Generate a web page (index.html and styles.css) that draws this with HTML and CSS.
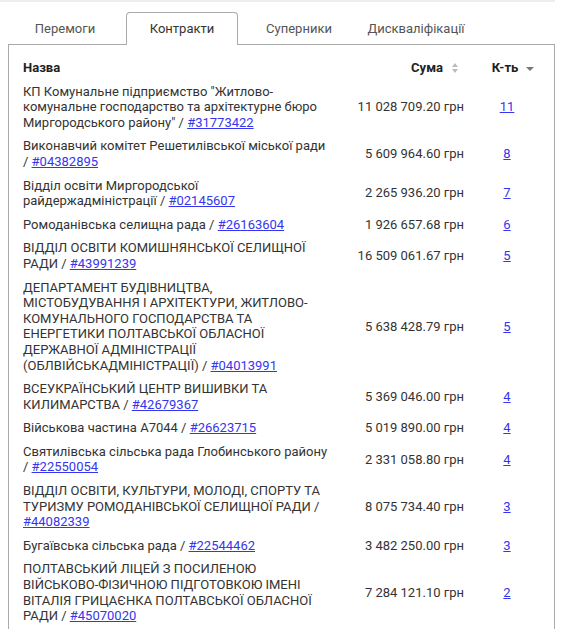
FILE: index.html
```html
<!DOCTYPE html>
<html lang="uk">
<head>
<meta charset="utf-8">
<title>Контракти</title>
<link rel="stylesheet" href="styles.css">
</head>
<body>
<div class="topline"></div>
<div class="tabs">
  <div class="tab">Перемоги</div>
  <div class="tab active">Контракти</div>
  <div class="tab">Суперники</div>
  <div class="tab">Дискваліфікації</div>
</div>
<div class="panel">
  <table class="contracts">
    <colgroup>
      <col class="c-name">
      <col class="c-sum">
      <col class="c-count">
    </colgroup>
    <thead>
      <tr>
        <th class="name">Назва</th>
        <th class="sum">Сума<span class="sort-both"></span></th>
        <th class="count"><span class="sort-desc">К-ть</span></th>
      </tr>
    </thead>
    <tbody>
      <tr>
        <td class="name">КП Комунальне підприємство "Житлово-комунальне господарство та архітектурне бюро Миргородського району" / <a href="#">#31773422</a></td>
        <td class="sum">11 028 709.20 грн</td>
        <td class="count"><a href="#">11</a></td>
      </tr>
      <tr>
        <td class="name">Виконавчий комітет Решетилівської міської ради / <a href="#">#04382895</a></td>
        <td class="sum">5 609 964.60 грн</td>
        <td class="count"><a href="#">8</a></td>
      </tr>
      <tr>
        <td class="name">Відділ освіти Миргородської райдержадміністрації / <a href="#">#02145607</a></td>
        <td class="sum">2 265 936.20 грн</td>
        <td class="count"><a href="#">7</a></td>
      </tr>
      <tr>
        <td class="name">Ромоданівська селищна рада / <a href="#">#26163604</a></td>
        <td class="sum">1 926 657.68 грн</td>
        <td class="count"><a href="#">6</a></td>
      </tr>
      <tr>
        <td class="name">ВІДДІЛ ОСВІТИ КОМИШНЯНСЬКОЇ СЕЛИЩНОЇ РАДИ / <a href="#">#43991239</a></td>
        <td class="sum">16 509 061.67 грн</td>
        <td class="count"><a href="#">5</a></td>
      </tr>
      <tr>
        <td class="name">ДЕПАРТАМЕНТ БУДІВНИЦТВА, МІСТОБУДУВАННЯ І АРХІТЕКТУРИ, ЖИТЛОВО-КОМУНАЛЬНОГО ГОСПОДАРСТВА ТА ЕНЕРГЕТИКИ ПОЛТАВСЬКОЇ ОБЛАСНОЇ ДЕРЖАВНОЇ АДМІНІСТРАЦІЇ (ОБЛВІЙСЬКАДМІНІСТРАЦІЇ) / <a href="#">#04013991</a></td>
        <td class="sum">5 638 428.79 грн</td>
        <td class="count"><a href="#">5</a></td>
      </tr>
      <tr>
        <td class="name">ВСЕУКРАЇНСЬКИЙ ЦЕНТР ВИШИВКИ ТА КИЛИМАРСТВА / <a href="#">#42679367</a></td>
        <td class="sum">5 369 046.00 грн</td>
        <td class="count"><a href="#">4</a></td>
      </tr>
      <tr>
        <td class="name">Військова частина А7044 / <a href="#">#26623715</a></td>
        <td class="sum">5 019 890.00 грн</td>
        <td class="count"><a href="#">4</a></td>
      </tr>
      <tr>
        <td class="name">Святилівська сільська рада Глобинського району / <a href="#">#22550054</a></td>
        <td class="sum">2 331 058.80 грн</td>
        <td class="count"><a href="#">4</a></td>
      </tr>
      <tr>
        <td class="name">ВІДДІЛ ОСВІТИ, КУЛЬТУРИ, МОЛОДІ, СПОРТУ ТА ТУРИЗМУ РОМОДАНІВСЬКОЇ СЕЛИЩНОЇ РАДИ / <a href="#">#44082339</a></td>
        <td class="sum">8 075 734.40 грн</td>
        <td class="count"><a href="#">3</a></td>
      </tr>
      <tr>
        <td class="name">Бугаївська сільська рада / <a href="#">#22544462</a></td>
        <td class="sum">3 482 250.00 грн</td>
        <td class="count"><a href="#">3</a></td>
      </tr>
      <tr>
        <td class="name">ПОЛТАВСЬКИЙ ЛІЦЕЙ З ПОСИЛЕНОЮ ВІЙСЬКОВО-ФІЗИЧНОЮ ПІДГОТОВКОЮ ІМЕНІ ВІТАЛІЯ ГРИЦАЄНКА ПОЛТАВСЬКОЇ ОБЛАСНОЇ РАДИ / <a href="#">#45070020</a></td>
        <td class="sum">7 284 121.10 грн</td>
        <td class="count"><a href="#">2</a></td>
      </tr>
    </tbody>
  </table>
</div>
</body>
</html>
```
FILE: styles.css
```css
html, body {
  margin: 0;
  padding: 0;
  background: #fff;
}

body {
  font-family: Roboto, "Liberation Sans", Arial, sans-serif;
  font-size: 13px;
  line-height: 1.2;
  color: #333;
}

.topline {
  width: 555px;
  height: 2px;
  background: #eeeeee;
}

.tabs {
  display: flex;
  gap: 5px;
  margin-top: 10px;
  margin-bottom: -1px;
  padding-left: 9px;
}

.tab {
  box-sizing: border-box;
  width: 112px;
  height: 33px;
  line-height: 32px;
  text-align: center;
  color: #555;
  border: 1px solid transparent;
  border-bottom: 0;
  border-radius: 4px 4px 0 0;
}

.tab.active {
  position: relative;
  z-index: 1;
  color: #333;
  background: #fff;
  border-color: #aaa;
}

.panel {
  box-sizing: border-box;
  width: 547px;
  margin-left: 8px;
  border: 1px solid #aaa;
  border-bottom: 0;
  padding: 11px 0 20px 14px;
}

.contracts {
  border-collapse: collapse;
  table-layout: fixed;
  width: 527px;
}

.c-name { width: 318px; }
.c-sum { width: 123px; }
.c-count { width: 86px; }

.contracts th,
.contracts td {
  padding: 4px 0;
  vertical-align: middle;
}

.contracts th {
  font-weight: 700;
  color: #222;
}

.contracts th.name,
.contracts td.name {
  text-align: left;
  padding-right: 10px;
}

.contracts th.sum {
  text-align: right;
  padding-right: 6px;
}

.contracts td.sum {
  text-align: right;
  white-space: nowrap;
}

.contracts th.count,
.contracts td.count {
  text-align: center;
}

.contracts th.count {
  padding-right: 4px;
}

.contracts a {
  color: #3535ee;
  text-decoration: underline;
}

.sort-both {
  display: inline-block;
  position: relative;
  width: 6px;
  height: 10px;
  margin-left: 9px;
  vertical-align: -1px;
}

.sort-both::before,
.sort-both::after {
  content: "";
  position: absolute;
  left: 0;
  width: 0;
  height: 0;
  border-left: 3px solid transparent;
  border-right: 3px solid transparent;
}

.sort-both::before {
  top: 0;
  border-bottom: 4px solid #bbb;
}

.sort-both::after {
  bottom: 0;
  border-top: 4px solid #bbb;
}

.sort-desc {
  position: relative;
}

.sort-desc::after {
  content: "";
  position: absolute;
  left: calc(100% + 8px);
  top: 50%;
  margin-top: -1px;
  width: 0;
  height: 0;
  border-left: 4px solid transparent;
  border-right: 4px solid transparent;
  border-top: 4px solid #777;
}
```
